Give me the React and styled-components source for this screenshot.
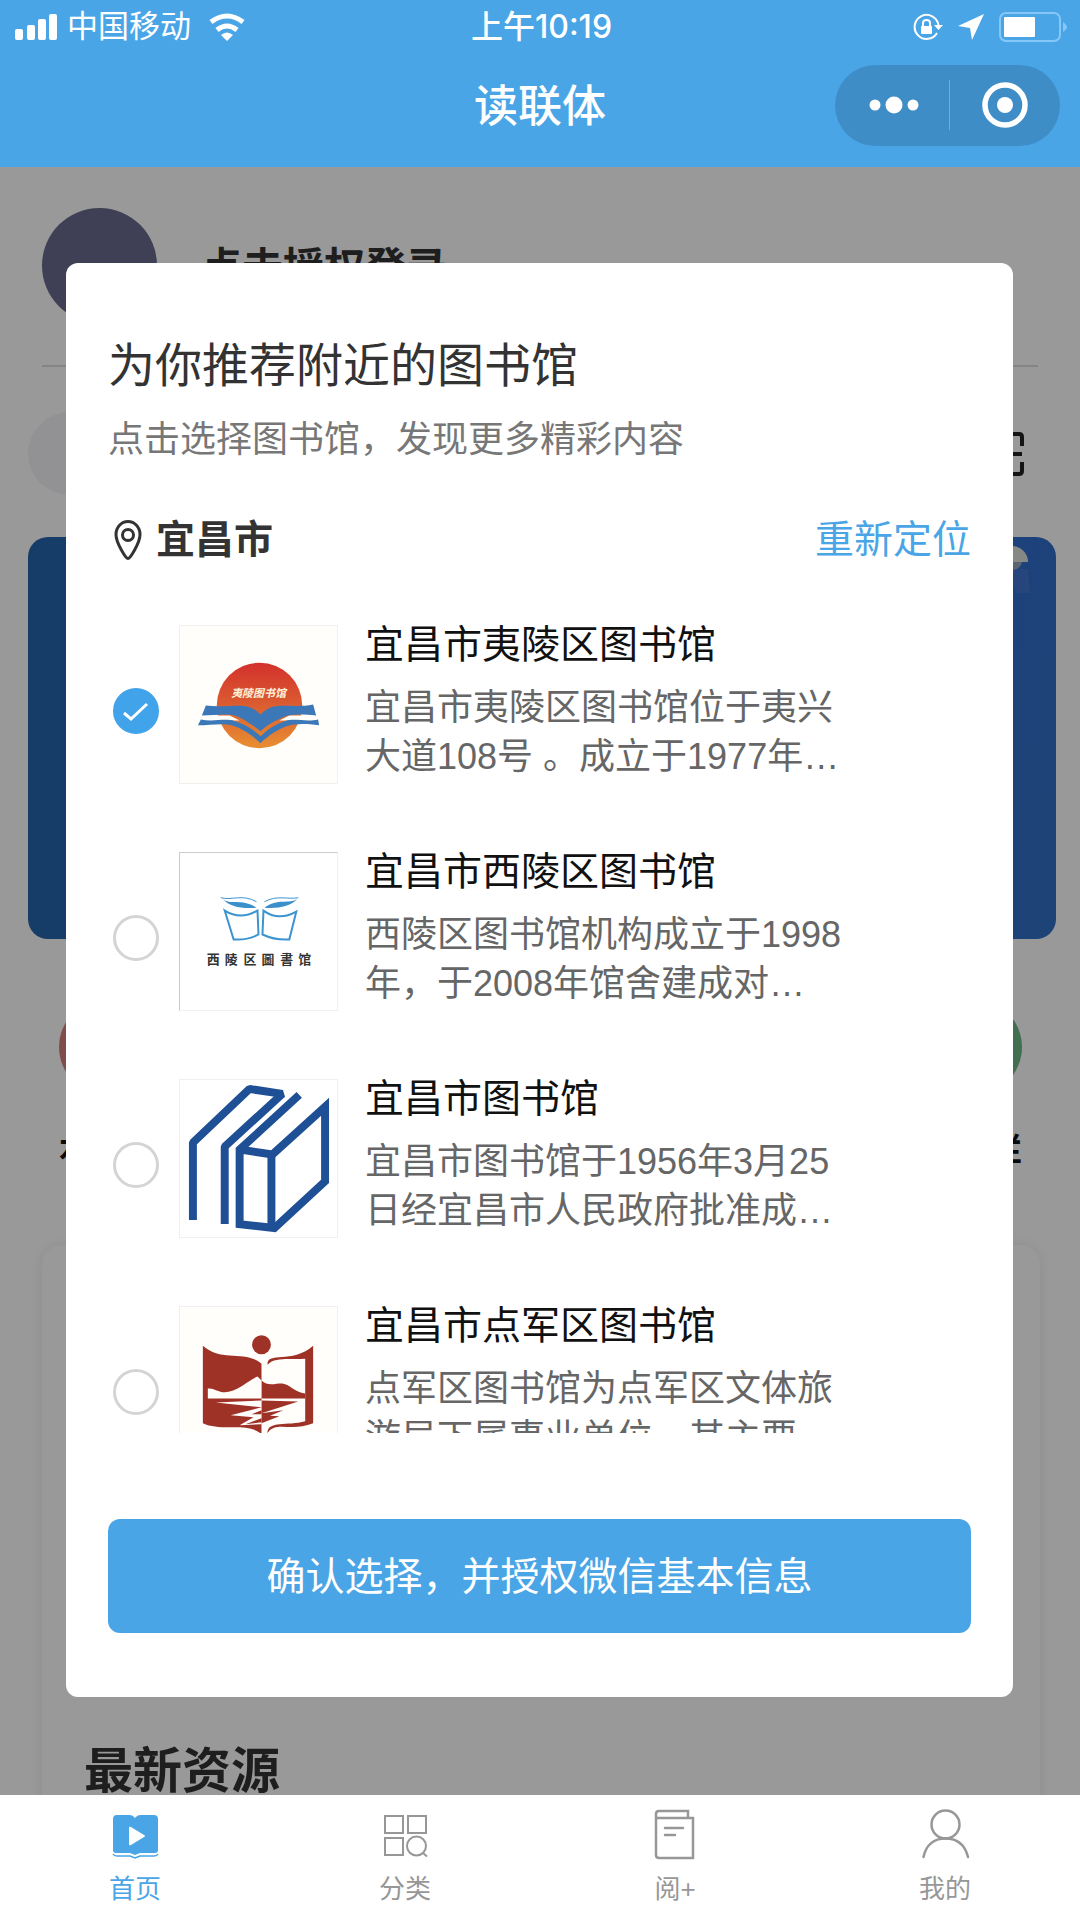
import { useState } from 'react';
import styled, { createGlobalStyle } from 'styled-components';

const BLUE = '#4aa5e6';

const YilingLogo = () => (
    <svg viewBox="0 0 158 158" aria-hidden="true">
        <defs>
            <linearGradient id="sun" x1="0" y1="0" x2="0" y2="1">
                <stop offset="0" stopColor="#d3302c" />
                <stop offset="0.55" stopColor="#dc6231" />
                <stop offset="1" stopColor="#e88f31" />
            </linearGradient>
        </defs>
        <rect width="158" height="158" fill="#fffefb" />
        <circle cx="80" cy="80" r="43" fill="url(#sun)" />
        <text x="79" y="71" textAnchor="middle" fontSize="11" fontWeight="700" fontStyle="italic" fill="#fff3dc">夷陵图书馆</text>
        <path d="M22 90H50L60 95H20Z M137 90H110L100 95H139Z" fill="#fffefb" />
        <path d="M26 80C42 82 58 79 68 81Q75 83 81 89Q87 83 94 81C104 79 120 82 134 79L137 90C122 89 110 88 101 93C92 97 86 101 81 106C75 101 68 96 60 92C50 87 38 90 22 90Z" fill="#3c78b8" />
        <path d="M21 94C34 97 46 92 56 96C66 99 75 105 81 111C87 105 95 99 105 96C115 92 126 97 139 94L140 100C126 98 116 98 107 101C97 105 88 111 81 118C74 111 64 104 55 101C45 97 32 100 18 100Z" fill="#3c78b8" />
    </svg>
);

const XilingLogo = () => (
    <svg viewBox="0 0 158 158" aria-hidden="true">
        <rect width="158" height="158" fill="#fff" />
        <g fill="none" stroke="#3b93cf" strokeWidth="2">
            <path d="M45 58Q61 68 78 58L79 82Q68 88 54 87Z" />
            <path d="M84 58Q99 69 117 59L110 87Q96 88 83 82Z" />
            <path d="M41 45C52 48 63 41 77 49" strokeWidth="1" />
            <path d="M85 49C98 42 108 47 119 45" strokeWidth="1" />
        </g>
        <path d="M43 46C50 53 62 45 77 55C64 56 50 55 43 46Z" fill="#3b8fca" />
        <path d="M118 46C110 52 98 45 85 55C98 56 112 54 118 46Z" fill="#3b8fca" />
        <text x="27 45 64 82 101 119" y="112" fontSize="13" fontWeight="700" fill="#333">西陵区圖書馆</text>
    </svg>
);

const YichangLogo = () => (
    <svg viewBox="0 0 158 158" aria-hidden="true">
        <rect width="158" height="158" fill="#fff" />
        <g fill="none" stroke="#1f5096" strokeWidth="8">
            <path d="M13 141V63L70 9L103 14L45 67V145" strokeLinejoin="bevel" />
            <path d="M120 15L60 70V145L95 149L146 102V27L93 75L61 70" />
            <path d="M92 75V147" />
        </g>
    </svg>
);

const DianjunLogo = () => (
    <svg viewBox="0 0 158 158" aria-hidden="true">
        <rect width="158" height="158" fill="#fffefb" />
        <g fill="#9f3227">
            <circle cx="82" cy="38" r="9.5" />
            <path d="M23 39C42 56 66 43 82 57V128C68 115 42 126 23 117Z" />
            <path d="M88 58C88 44 112 58 134 39V117C112 126 96 114 88 127C88 114 108 120 126 115V52C108 53 96 50 88 58Z" />
            <path d="M82 74C88 80 95 77 103 77C111 78 115 86 126 87V92H82Z" />
            <path d="M82 94L119 95L82 107L104 104L82 113V109L100 110L82 117Z" />
        </g>
        <g fill="#fffefb">
            <path d="M28 82C35 81 40 88 50 85C60 83 69 74 78 70L82 74V92H28Z" />
            <path d="M36 96L82 94V101Z" />
            <path d="M51 109L82 101V104L72 108H82V112L66 118L82 116V118L60 119L74 111Z" />
        </g>
    </svg>
);

const libraries = [
    { id: 'yiling', name: '宜昌市夷陵区图书馆', intro: '宜昌市夷陵区图书馆位于夷兴大道108号 。成立于1977年…', Logo: YilingLogo },
    { id: 'xiling', name: '宜昌市西陵区图书馆', intro: '西陵区图书馆机构成立于1998年，于2008年馆舍建成对…', Logo: XilingLogo, edge: '#ccc' },
    { id: 'yichang', name: '宜昌市图书馆', intro: '宜昌市图书馆于1956年3月25日经宜昌市人民政府批准成…', Logo: YichangLogo },
    { id: 'dianjun', name: '宜昌市点军区图书馆', intro: '点军区图书馆为点军区文体旅游局下属事业单位，其主要…', Logo: DianjunLogo },
];

const HomeIcon = () => (
    <TabSvg viewBox="0 0 52 52" aria-hidden="true">
        <path d="M8 7H21Q24 7 26 10Q28 7 31 7H45Q49 7 49 11V42Q49 45 46 45H31L26 47L21 45H7Q4 45 4 42V11Q4 7 8 7Z" fill={BLUE} />
        <path d="M4 46Q5 48 8 48H21L26 50L31 48H45Q48 48 49 46" fill="none" stroke={BLUE} strokeWidth="1.500" />
        <path d="M20 20Q20 18 22 19L35 27Q37 28 35 29L22 37Q20 38 20 36Z" fill="#fff" />
    </TabSvg>
);

const CategoryIcon = () => (
    <TabSvg viewBox="0 0 52 52" fill="none" stroke="#979797" strokeWidth="2" aria-hidden="true">
        <rect x="6" y="8" width="18" height="17" />
        <rect x="29" y="8" width="18" height="17" />
        <rect x="6" y="30" width="18" height="17" />
        <circle cx="37.5" cy="38" r="9.5" />
        <path d="M44 45L48 48.500" />
    </TabSvg>
);

const ReadIcon = () => (
    <TabSvg viewBox="0 0 52 52" fill="none" stroke="#979797" strokeWidth="2.500" aria-hidden="true">
        <path d="M39 10V3H10Q7 3 7 6V47Q7 50 10 50H44V10H7" />
        <path d="M16 20H34M16 27H26" strokeLinecap="round" />
    </TabSvg>
);

const MineIcon = () => (
    <TabSvg viewBox="0 0 52 52" fill="none" stroke="#979797" strokeWidth="2.500" strokeLinecap="round" aria-hidden="true">
        <circle cx="26.5" cy="16.5" r="14" />
        <path d="M4.500 49C7 37 15 30.500 26.500 30.500S46 37 49 49" />
    </TabSvg>
);

const tabs = [
    { label: '首页', Icon: HomeIcon, active: true },
    { label: '分类', Icon: CategoryIcon },
    { label: '阅+', Icon: ReadIcon },
    { label: '我的', Icon: MineIcon },
];

function StatusBar() {
    return (
        <Status>
            <StatusGroup>
                <svg width="42" height="26" viewBox="0 0 42 26" fill="#fff" aria-hidden="true">
                    <rect x="0" y="15" width="8" height="11" rx="2" />
                    <rect x="12" y="11" width="8" height="15" rx="2" />
                    <rect x="23" y="5" width="8" height="21" rx="2" />
                    <rect x="34" y="0" width="8" height="26" rx="2" />
                </svg>
                <span>中国移动</span>
                <WifiIcon width="36" height="28" viewBox="0 0 36 28" fill="none" stroke="#fff" strokeWidth="5" aria-hidden="true">
                    <path d="M2 9Q18 -3 34 9" />
                    <path d="M8 17Q18 9 28 17" />
                    <path d="M12 22Q18 17 24 22L18 28Z" fill="#fff" stroke="none" />
                </WifiIcon>
            </StatusGroup>
            <Clock>上午10:19</Clock>
            <StatusGroup $end>
                <svg width="30" height="28" viewBox="0 0 30 28" fill="none" stroke="#fff" strokeWidth="2" aria-hidden="true">
                    <path d="M24 20A12 12 0 1 1 25.500 12" />
                    <path d="M21 12H30L25.500 17Z" fill="#fff" stroke="none" />
                    <rect x="8" y="13" width="11" height="8" rx="1" fill="#fff" stroke="none" />
                    <path d="M10 14V10Q10 7 13.500 7T17 10V14" />
                </svg>
                <svg width="26" height="26" viewBox="0 0 26 26" fill="#fff" aria-hidden="true">
                    <path d="M26 0L14 26L12 14L0 12Z" />
                </svg>
                <svg width="69" height="30" viewBox="0 0 69 30" aria-hidden="true">
                    <rect x="1" y="1" width="60" height="28" rx="6" fill="none" stroke="#85c8f7" strokeWidth="2" />
                    <rect x="5" y="5" width="31" height="20" rx="1" fill="#fff" />
                    <path d="M64 10Q68 13 68 15T64 20Z" fill="#85c8f7" />
                </svg>
            </StatusGroup>
        </Status>
    );
}

function LibraryItem({ library, checked, onSelect }) {
    const { id, name, intro, Logo, edge } = library;
    return (
        <Item>
            <RadioBox>
                <Radio type="radio" name="library" id={id} checked={checked} onChange={() => onSelect(id)} />
                {checked && (
                    <Tick viewBox="0 0 46 46" fill="none" stroke="#fff" strokeWidth="3" aria-hidden="true">
                        <path d="M11 25L18 31L34 16" />
                    </Tick>
                )}
            </RadioBox>
            <ItemLabel htmlFor={id}>
                <Thumb $edge={edge}><Logo /></Thumb>
                <ItemText>
                    <ItemName>{name}</ItemName>
                    <ItemIntro>{intro}</ItemIntro>
                </ItemText>
            </ItemLabel>
        </Item>
    );
}

export default function App() {
    const [selected, setSelected] = useState('yiling');

    return (
        <Page>
            <GlobalStyle />
            <Header>
                <StatusBar />
                <TitleBar>
                    <PageTitle>读联体</PageTitle>
                    <Capsule>
                        <CapsuleButton aria-label="更多">
                            <svg width="50" height="48" viewBox="0 0 50 48" fill="#fff" aria-hidden="true">
                                <circle cx="6" cy="24" r="5.500" />
                                <circle cx="25" cy="24" r="8.500" />
                                <circle cx="44" cy="24" r="5.500" />
                            </svg>
                        </CapsuleButton>
                        <CapsuleLine />
                        <CapsuleButton aria-label="关闭">
                            <svg width="48" height="48" viewBox="0 0 48 48" aria-hidden="true">
                                <circle cx="24" cy="24" r="20" fill="none" stroke="#fff" strokeWidth="5.500" />
                                <circle cx="24" cy="24" r="8" fill="#fff" />
                            </svg>
                        </CapsuleButton>
                    </Capsule>
                </TitleBar>
            </Header>

            <Main>
                <UserRow>
                    <Avatar />
                    <UserName>点击授权登录</UserName>
                </UserRow>
                <Divider />
                <SearchRow>
                    <SearchPill />
                    <svg width="44" height="44" viewBox="0 0 44 44" fill="none" stroke="#222" strokeWidth="4" aria-hidden="true">
                        <path d="M2 14V5Q2 2 5 2H14M30 2H39Q42 2 42 5V14M42 30V39Q42 42 39 42H30M14 42H5Q2 42 2 39V30M2 22H42" />
                    </svg>
                </SearchRow>
                <Banner>
                    <svg width="60" height="60" viewBox="0 0 60 60" aria-hidden="true">
                        <path d="M24 24L44 24L46 48L32 48Z" fill="#6286cf" opacity="0.300" />
                        <path d="M12 17A16 16 0 0 1 44 17Z" fill="#dfe3de" />
                        <path d="M20 17H38Q36 25 28 25T20 17Z" fill="#96a9bd" />
                    </svg>
                </Banner>
                <Shortcuts>
                    <Shortcut>
                        <ShortcutDot $color="#d5807e" />
                        <span>本</span>
                    </Shortcut>
                    <Shortcut $end>
                        <ShortcutDot $color="#6fb987" />
                        <span>栏</span>
                    </Shortcut>
                </Shortcuts>
                <Card>
                    <CardTitle>最新资源</CardTitle>
                </Card>

                <Mask>
                    <Modal role="dialog" aria-labelledby="modal-title">
                        <ModalTitle id="modal-title">为你推荐附近的图书馆</ModalTitle>
                        <ModalHint>点击选择图书馆，发现更多精彩内容</ModalHint>
                        <CityRow>
                            <City>
                                <svg width="40" height="40" viewBox="0 0 40 40" fill="none" stroke="#333" strokeWidth="3" aria-hidden="true">
                                    <path d="M20 38.500C18 38.500 8 23 8 14.500A12 13 0 0 1 32 14.500C32 23 22 38.500 20 38.500Z" />
                                    <circle cx="20" cy="15" r="5.500" />
                                </svg>
                                宜昌市
                            </City>
                            <Relocate>重新定位</Relocate>
                        </CityRow>
                        <List>
                            {libraries.map((library) => (
                                <LibraryItem
                                    key={library.id}
                                    library={library}
                                    checked={library.id === selected}
                                    onSelect={setSelected}
                                />
                            ))}
                        </List>
                        <Confirm>确认选择，并授权微信基本信息</Confirm>
                    </Modal>
                </Mask>
            </Main>

            <TabBar>
                {tabs.map(({ label, Icon, active }) => (
                    <Tab key={label} href="#" $active={active}>
                        <Icon />
                        {label}
                    </Tab>
                ))}
            </TabBar>
        </Page>
    );
}

const GlobalStyle = createGlobalStyle`
    * {
        box-sizing: border-box;
    }

    body {
        margin: 0;
        font-family: "Liberation Sans", "Noto Sans CJK SC", sans-serif;
    }

    h1, h2, p, ul {
        margin: 0;
        padding: 0;
        font-weight: 400;
    }

    button {
        border: 0;
        padding: 0;
        background: none;
        font-family: inherit;
        cursor: pointer;
    }

    svg {
        display: block;
        flex-shrink: 0;
    }
`;

const Page = styled.div`
    display: flex;
    flex-direction: column;
    height: 100vh;
    overflow: hidden;
    background: #fff;
`;

const Header = styled.header`
    padding-bottom: 11px;
    background: ${BLUE};
    color: #fff;
`;

const Status = styled.div`
    display: grid;
    grid-template-columns: 1fr auto 1fr;
    align-items: center;
    height: 54px;
    padding: 0 12px 0 15px;
    font-size: 31px;
    line-height: 40px;
`;

const StatusGroup = styled.div`
    display: flex;
    align-items: center;
    justify-content: ${(props) => props.$end ? 'flex-end' : 'flex-start'};
    gap: ${(props) => props.$end ? '15px' : '10px'};
`;

const WifiIcon = styled.svg`
    margin-left: 8px;
`;

const Clock = styled.span`
    font-family: Inter, "Noto Sans CJK SC", sans-serif;
    font-weight: 500;
    font-size: 32px;
`;

const TitleBar = styled.div`
    display: grid;
    grid-template-columns: 1fr auto 1fr;
    align-items: center;
    height: 102px;
    padding: 0 20px;
`;

const PageTitle = styled.h1`
    grid-column: 2;
    padding-top: 3px;
    font-size: 44px;
    line-height: 60px;
    font-weight: 500;
`;

const Capsule = styled.div`
    display: flex;
    align-items: center;
    justify-self: end;
    width: 225px;
    height: 81px;
    padding-left: 4px;
    border-radius: 41px;
    background: #3e8dc7;
`;

const CapsuleButton = styled.button`
    display: flex;
    flex: 1;
    justify-content: center;
`;

const CapsuleLine = styled.span`
    width: 1px;
    height: 50px;
    background: #68aedf;
`;

const Main = styled.main`
    position: relative;
    flex: 1;
    min-height: 0;
    overflow: hidden;
    padding: 41px 24px 0 28px;
`;

const UserRow = styled.div`
    display: flex;
    align-items: center;
    gap: 44px;
    padding: 0 14px;
`;

const Avatar = styled.div`
    width: 115px;
    height: 115px;
    border-radius: 50%;
    background: #69698e;
`;

const UserName = styled.span`
    padding-top: 4px;
    font-size: 41px;
    line-height: 56px;
    font-weight: 700;
    color: #333;
`;

const Divider = styled.div`
    height: 2px;
    margin: 42px 18px 0 14px;
    background: #dedede;
`;

const SearchRow = styled.div`
    display: flex;
    align-items: center;
    gap: 40px;
    margin-top: 45px;
    padding-right: 32px;
`;

const SearchPill = styled.div`
    flex: 1;
    height: 83px;
    border-radius: 42px;
    background: #f4f4f8;
`;

const Banner = styled.div`
    display: flex;
    justify-content: flex-end;
    height: 402px;
    margin-top: 42px;
    padding: 8px 12px 0 0;
    border-radius: 20px;
    background: linear-gradient(100deg, #2666ad 30%, #2f6be0 75%, #3270c4);
`;

const Shortcuts = styled.div`
    display: flex;
    justify-content: space-between;
    margin-top: 60px;
    padding: 0 34px 0 31px;
`;

const Shortcut = styled.div`
    display: flex;
    flex-direction: column;
    align-items: ${(props) => props.$end ? 'flex-end' : 'flex-start'};
    gap: 35px;
    font-size: 32px;
    line-height: 40px;
    font-weight: 700;
    color: #111;
`;

const ShortcutDot = styled.div`
    width: 96px;
    height: 96px;
    border-radius: 50%;
    background: ${(props) => props.$color};
`;

const Card = styled.section`
    margin: 75px 16px 0 14px;
    padding: 494px 42px 40px;
    border-radius: 20px;
    box-shadow: 0 0 12px rgba(0, 0, 0, 0.08);
`;

const CardTitle = styled.h2`
    padding-top: 2px;
    font-size: 49px;
    line-height: 60px;
    font-weight: 700;
    color: #333;
`;

const Mask = styled.div`
    position: absolute;
    inset: 0;
    display: flex;
    padding: 96px 67px 98px 66px;
    background: rgba(0, 0, 0, 0.4);
`;

const Modal = styled.div`
    display: flex;
    flex: 1;
    flex-direction: column;
    min-width: 0;
    padding: 73px 42px 64px;
    border-radius: 12px;
    background: #fff;
`;

const ModalTitle = styled.h2`
    font-size: 47px;
    line-height: 60px;
    color: #333;
`;

const ModalHint = styled.p`
    margin-top: 20px;
    font-size: 36px;
    line-height: 48px;
    color: #777;
`;

const CityRow = styled.div`
    display: flex;
    align-items: center;
    justify-content: space-between;
    height: 48px;
    margin-top: 52px;
    font-size: 39px;
`;

const City = styled.span`
    display: flex;
    align-items: center;
    gap: 8px;
    line-height: 48px;
    font-weight: 700;
    color: #333;
`;

const Relocate = styled.button`
    font-size: 39px;
    line-height: 48px;
    color: ${BLUE};
`;

const List = styled.ul`
    flex: 1;
    min-height: 0;
    margin-top: 56px;
    overflow-y: auto;
    scrollbar-width: none;
    list-style: none;
`;

const Item = styled.li`
    display: flex;
    align-items: flex-start;
    gap: 20px;
    padding: 0 116px 63px 5px;
`;

const RadioBox = styled.div`
    display: grid;
    width: 46px;
    height: 46px;
    margin-top: 68px;
`;

const Radio = styled.input`
    grid-area: 1 / 1;
    appearance: none;
    width: 46px;
    height: 46px;
    margin: 0;
    border: 3px solid #d4d4d4;
    border-radius: 50%;

    &:checked {
        border-color: #41a3ea;
        background: #41a3ea;
    }
`;

const Tick = styled.svg`
    grid-area: 1 / 1;
    pointer-events: none;
`;

const ItemLabel = styled.label`
    display: flex;
    flex: 1;
    align-items: flex-start;
    gap: 27px;
    min-width: 0;
`;

const Thumb = styled.div`
    flex-shrink: 0;
    width: 159px;
    height: 159px;
    margin-top: 5px;
    border: 1px solid #f0f0f0;
    border-top-color: ${(props) => props.$edge || '#f0f0f0'};
    border-left-color: ${(props) => props.$edge || '#f0f0f0'};
`;

const ItemText = styled.div`
    flex: 1;
    min-width: 0;
`;

const ItemName = styled.p`
    font-size: 39px;
    line-height: 50px;
    color: #111;
`;

const ItemIntro = styled.p`
    margin-top: 13px;
    font-size: 36px;
    line-height: 49px;
    color: #666;
`;

const Confirm = styled.button`
    height: 114px;
    margin-top: 86px;
    padding-bottom: 6px;
    border-radius: 12px;
    background: ${BLUE};
    font-size: 39px;
    color: #fff;
`;

const TabBar = styled.nav`
    display: flex;
    height: 125px;
    background: #fff;
`;

const Tab = styled.a`
    display: flex;
    flex: 1;
    flex-direction: column;
    align-items: center;
    gap: 11px;
    padding-top: 13px;
    font-size: 26px;
    line-height: 36px;
    text-decoration: none;
    color: ${(props) => props.$active ? BLUE : '#979797'};
`;

const TabSvg = styled.svg`
    width: 52px;
    height: 52px;
`;
